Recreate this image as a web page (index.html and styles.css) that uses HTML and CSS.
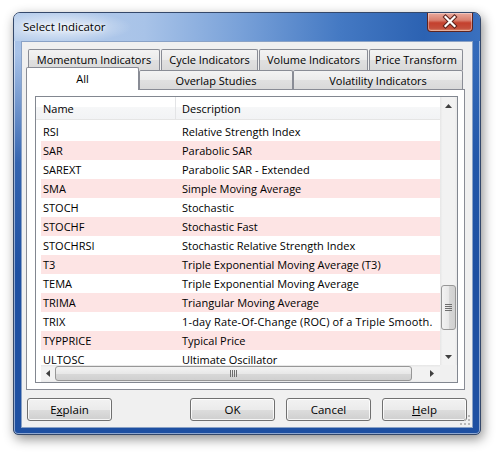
FILE: index.html
```html
<!DOCTYPE html>
<html>
<head>
<meta charset="utf-8">
<link rel="stylesheet" href="styles.css">
</head>
<body>
<div class="window">
  <div class="titlebar">
    <span class="title">Select Indicator</span>
    <div class="close">
      <svg width="46" height="19" viewBox="0 0 46 19">
        <path d="M18.5 5 L27.5 14 M27.5 5 L18.5 14" stroke="#5a1f1a" stroke-width="4.2" stroke-linecap="square" fill="none"/>
        <path d="M18.5 5 L27.5 14 M27.5 5 L18.5 14" stroke="#ffffff" stroke-width="2.2" stroke-linecap="square" fill="none"/>
      </svg>
    </div>
  </div>
  <div class="client">
    <div class="tabs">
      <div class="tabrow back">
        <div class="tab w-mom">Momentum Indicators</div>
        <div class="tab w-cyc">Cycle Indicators</div>
        <div class="tab w-vlm">Volume Indicators</div>
        <div class="tab w-prc">Price Transform</div>
      </div>
      <div class="tabrow front">
        <div class="tab sel w-all">All</div>
        <div class="tab w-ovl">Overlap Studies</div>
        <div class="tab w-vty">Volatility Indicators</div>
      </div>
    </div>
    <div class="panel">
      <div class="list">
        <div class="main">
          <div class="header">
            <div class="hname">Name</div>
            <div class="hdesc">Description</div>
          </div>
          <div class="rows">
            <div class="row"><span class="c1">RSI</span><span class="c2">Relative Strength Index</span></div>
            <div class="row alt"><span class="c1">SAR</span><span class="c2">Parabolic SAR</span></div>
            <div class="row"><span class="c1">SAREXT</span><span class="c2">Parabolic SAR - Extended</span></div>
            <div class="row alt"><span class="c1">SMA</span><span class="c2">Simple Moving Average</span></div>
            <div class="row"><span class="c1">STOCH</span><span class="c2">Stochastic</span></div>
            <div class="row alt"><span class="c1">STOCHF</span><span class="c2">Stochastic Fast</span></div>
            <div class="row"><span class="c1">STOCHRSI</span><span class="c2">Stochastic Relative Strength Index</span></div>
            <div class="row alt"><span class="c1">T3</span><span class="c2">Triple Exponential Moving Average (T3)</span></div>
            <div class="row"><span class="c1">TEMA</span><span class="c2">Triple Exponential Moving Average</span></div>
            <div class="row alt"><span class="c1">TRIMA</span><span class="c2">Triangular Moving Average</span></div>
            <div class="row"><span class="c1">TRIX</span><span class="c2 wide">1-day Rate-Of-Change (ROC) of a Triple Smooth.</span></div>
            <div class="row alt"><span class="c1">TYPPRICE</span><span class="c2">Typical Price</span></div>
            <div class="row"><span class="c1">ULTOSC</span><span class="c2">Ultimate Oscillator</span></div>
          </div>
        </div>
        <div class="vscroll">
          <div class="sbtn"><svg width="7" height="4" viewBox="0 0 7 4"><path d="M0 4 L3.5 0 L7 4 Z" fill="#404040"/></svg></div>
          <div class="vtrack">
            <div class="vthumb">
              <svg width="7" height="7" viewBox="0 0 7 7"><path d="M0 0.5 H7 M0 2.5 H7 M0 4.5 H7 M0 6.5 H7" stroke="#6e6e6e" stroke-width="1"/></svg>
            </div>
          </div>
          <div class="sbtn"><svg width="7" height="4" viewBox="0 0 7 4"><path d="M0 0 L3.5 4 L7 0 Z" fill="#404040"/></svg></div>
        </div>
        <div class="hscroll">
          <div class="hbtn left"><svg width="4" height="7" viewBox="0 0 4 7"><path d="M4 0 L0 3.5 L4 7 Z" fill="#404040"/></svg></div>
          <div class="hthumb">
            <svg width="7" height="7" viewBox="0 0 7 7"><path d="M0.5 0 V7 M2.5 0 V7 M4.5 0 V7 M6.5 0 V7" stroke="#6e6e6e" stroke-width="1"/></svg>
          </div>
          <div class="htrack"></div>
          <div class="hbtn"><svg width="4" height="7" viewBox="0 0 4 7"><path d="M0 0 L4 3.5 L0 7 Z" fill="#404040"/></svg></div>
        </div>
        <div class="corner"></div>
      </div>
    </div>
    <div class="buttons">
      <div class="btn">E<u>x</u>plain</div>
      <div class="btn push">OK</div>
      <div class="btn">Cancel</div>
      <div class="btn"><u>H</u>elp</div>
    </div>
    <div class="grip">
      <svg width="10" height="10" viewBox="0 0 10 10">
        <g fill="#b9b9b9">
          <rect x="8" y="0" width="2" height="2"/>
          <rect x="4" y="4" width="2" height="2"/><rect x="8" y="4" width="2" height="2"/>
          <rect x="0" y="8" width="2" height="2"/><rect x="4" y="8" width="2" height="2"/><rect x="8" y="8" width="2" height="2"/>
        </g>
      </svg>
    </div>
  </div>
</div>
</body>
</html>
```
FILE: styles.css
```css
html, body {
  margin: 0;
  padding: 0;
  background: #ffffff;
}
body {
  font-family: "Open Sans", "Noto Sans", sans-serif;
  font-size: 11px;
  color: #000;
  width: 499px;
  height: 455px;
  overflow: hidden;
}
.window {
  box-sizing: border-box;
  width: 468px;
  height: 423px;
  margin: 12px 0 0 13px;
  border: 1px solid #34486a;
  border-radius: 7px 7px 5px 5px;
  padding: 0 8px 6px 7px;
  overflow: hidden;
  background:
    linear-gradient(180deg, rgba(32, 84, 166, 0) 0px, rgba(32, 84, 166, 0) 40px, rgba(32, 84, 166, 0.85) 150px, rgba(30, 80, 162, 1) 260px),
    linear-gradient(90deg, #a9c3e8 0%, #95b6e3 30%, #5f8fd0 60%, #3369b9 100%);
  box-shadow: 2px 4px 12px rgba(0, 0, 0, 0.45), 0 0 0 1px rgba(255,255,255,0.5) inset;
}
.titlebar {
  display: flex;
  align-items: flex-start;
  height: 28px;
  margin: 0 -8px 0 -7px;
  padding: 0 7px 0 8px;
  background:
    radial-gradient(ellipse 70px 16px at 48px 14px, rgba(255,255,255,0.7), rgba(255,255,255,0) 100%),
    linear-gradient(90deg, #b9cfec 0%, #a8c3e8 28%, #7aa2d9 48%, #4479c3 70%, #2c62b2 88%, #3a70bf 100%);
}
.title {
  padding: 6px 0 0 1px;
  line-height: 16px;
  font-size: 11.5px;
  color: #000;
  text-shadow: 0 0 6px #fff, 0 0 3px #fff;
}
.close {
  margin-left: auto;
  width: 46px;
  height: 19px;
  box-sizing: border-box;
  border: 1px solid #5e2420;
  border-top: none;
  border-radius: 0 0 4px 4px;
  background: linear-gradient(180deg, #e9a99d 0%, #d9806f 40%, #c4402d 55%, #c44f3c 85%, #dd8f72 100%);
  box-shadow: 0 0 0 1px rgba(255,255,255,0.35) inset;
}
.close svg {
  display: block;
  margin: -1px 0 0 -1px;
}
.client {
  position: relative;
  box-sizing: border-box;
  width: 452px;
  height: 387px;
  border: 1px solid #8aa2c6;
  background: #f0f0f0;
}
.tabs {
  position: relative;
  z-index: 2;
  margin-top: 7px;
  padding-left: 6px;
}
.tabrow {
  display: flex;
}
.tabrow.back {
  gap: 1px;
}
.tabrow.front {
  margin-top: -3px;
  margin-left: -2px;
  align-items: flex-start;
}
.tab {
  box-sizing: border-box;
  height: 21px;
  border: 1px solid #898c95;
  border-bottom: none;
  border-radius: 2px 2px 0 0;
  background: linear-gradient(180deg, #f3f3f3 0%, #ebebeb 50%, #e0e0e0 52%, #d9d9d9 100%);
  text-align: center;
  line-height: 19px;
  font-size: 11px;
  white-space: nowrap;
}
.front .tab {
  margin-top: 3px;
  height: 19px;
  line-height: 19px;
}
.front .tab.sel {
  margin-top: 0;
  height: 23px;
  line-height: 21px;
  background: #ffffff;
}
.w-mom { width: 132px; }
.w-cyc { width: 97px; }
.w-vlm { width: 109px; }
.w-prc { width: 94px; }
.w-all { width: 113px; }
.w-ovl { width: 154px; }
.w-vty { width: 170px; }
.panel {
  position: relative;
  z-index: 1;
  box-sizing: border-box;
  width: 439px;
  height: 301px;
  margin: -1px 0 0 4px;
  border: 1px solid #898c95;
  background: #ffffff;
  padding: 6px 6px 6px 8px;
}
.list {
  box-sizing: border-box;
  height: 287px;
  border: 1px solid #828790;
  display: grid;
  grid-template-columns: 1fr 17px;
  grid-template-rows: 1fr 17px;
  background: #fff;
}
.main {
  overflow: hidden;
}
.header {
  display: flex;
  height: 23px;
  box-sizing: border-box;
  border-bottom: 1px solid #e5e5e5;
  background: linear-gradient(180deg, #ffffff 0%, #ffffff 45%, #f6f7f8 46%, #f2f3f5 100%);
  line-height: 23px;
  font-size: 11px;
}
.hname {
  box-sizing: border-box;
  width: 140px;
  padding-left: 7px;
  border-right: 1px solid #e3e4e6;
}
.hdesc {
  padding-left: 6px;
}
.rows {
  margin: 2px 0 0 5px;
}
.row {
  display: grid;
  grid-template-columns: 139px 1fr;
  height: 19px;
  line-height: 19px;
  white-space: nowrap;
  overflow: hidden;
}
.row.alt {
  background: #fde4e4;
}
.c1, .c2 {
  padding-left: 2px;
  overflow: hidden;
}
.c2.wide {
  letter-spacing: 0.15px;
}
.vscroll {
  display: flex;
  flex-direction: column;
  background: linear-gradient(90deg, #e6e6e6 0%, #f2f2f2 15%, #f2f2f2 85%, #e9e9e9 100%);
}
.sbtn {
  height: 17px;
  display: flex;
  align-items: center;
  justify-content: center;
}
.vtrack {
  flex: 1;
}
.vthumb {
  box-sizing: border-box;
  width: 15px;
  height: 45px;
  margin: 171px 0 0 1px;
  border: 1px solid #979797;
  border-radius: 3px;
  background: linear-gradient(90deg, #f3f3f3 0%, #e8e8e8 50%, #d8d8d8 52%, #d0d0d0 100%);
  display: flex;
  align-items: center;
  justify-content: center;
}
.hscroll {
  display: flex;
  margin-left: 5px;
  background: linear-gradient(180deg, #e6e6e6 0%, #f2f2f2 15%, #f2f2f2 85%, #e9e9e9 100%);
}
.hbtn {
  width: 17px;
  display: flex;
  align-items: center;
  justify-content: center;
}
.hbtn.left {
  width: 14px;
}
.hthumb {
  box-sizing: border-box;
  width: 357px;
  height: 15px;
  margin-top: 1px;
  border: 1px solid #979797;
  border-radius: 3px;
  background: linear-gradient(180deg, #f3f3f3 0%, #e8e8e8 50%, #d8d8d8 52%, #d0d0d0 100%);
  display: flex;
  align-items: center;
  justify-content: center;
}
.htrack {
  flex: 1;
}
.corner {
  background: #f0f0f0;
}
.buttons {
  display: flex;
  gap: 11px;
  margin: 8px 5px 0 5px;
}
.btn {
  box-sizing: border-box;
  width: 85px;
  height: 23px;
  border: 1px solid #707070;
  border-radius: 3px;
  background: linear-gradient(180deg, #f2f2f2 0%, #ebebeb 50%, #dddddd 51%, #cfcfcf 100%);
  box-shadow: 0 0 0 1px rgba(255,255,255,0.8) inset;
  text-align: center;
  line-height: 21px;
  font-size: 11.5px;
}
.btn.push {
  margin-left: auto;
}
.grip {
  position: absolute;
  right: 2px;
  bottom: 2px;
  width: 10px;
  height: 10px;
}
.grip svg {
  display: block;
}
```
